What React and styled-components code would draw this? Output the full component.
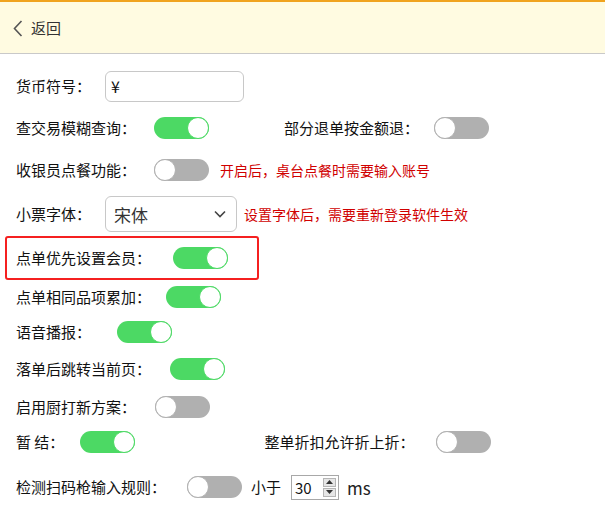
import React, { useState } from "react";
import styled, { createGlobalStyle } from "styled-components";

const GlobalStyle = createGlobalStyle`
  html, body {
    margin: 0;
    padding: 0;
    background: #ffffff;
  }
  body {
    font-family: "Noto Sans CJK SC", "Liberation Sans", sans-serif;
    color: #111;
  }
`;

const Toggle = ({ on, ml, onChange }) => (
  <Track $on={on} $ml={ml} onClick={onChange}>
    <Knob $on={on} />
  </Track>
);

const App = () => {
  const [flags, setFlags] = useState({
    fuzzy: true,
    partRefund: false,
    cashier: false,
    member: true,
    merge: true,
    voice: true,
    jump: true,
    kitchen: false,
    hold: true,
    discount: false,
    scanner: false,
  });

  const flip = (key) => () => setFlags((f) => ({ ...f, [key]: !f[key] }));

  return (
    <>
      <GlobalStyle />
      <Page>
        <Header>
          <BackIcon width="10" height="17" viewBox="0 0 10 17">
            <polyline points="8.5,1 1.5,8.5 8.5,16" fill="none" stroke="#555" strokeWidth="1.6" />
          </BackIcon>
          <BackText>返回</BackText>
        </Header>

        <Content>
          <Row $mt={16} $h={32}>
            <Label>货币符号：</Label>
            <TextInput defaultValue="¥" />
          </Row>

          <Row $mt={11}>
            <Label>查交易模糊查询：</Label>
            <Toggle on={flags.fuzzy} ml={18} onChange={flip("fuzzy")} />
            <Label $ml={75}>部分退单按金额退：</Label>
            <Toggle on={flags.partRefund} ml={15} onChange={flip("partRefund")} />
          </Row>

          <Row $mt={12}>
            <Label>收银员点餐功能：</Label>
            <Toggle on={flags.cashier} ml={18} onChange={flip("cashier")} />
            <Hint $ml={11}>开启后，桌台点餐时需要输入账号</Hint>
          </Row>

          <Row $mt={11} $h={36}>
            <Label>小票字体：</Label>
            <Select>
              <span>宋体</span>
              <Chevron width="12" height="8" viewBox="0 0 12 8">
                <polyline points="1,1.5 6,6.5 11,1.5" fill="none" stroke="#444" strokeWidth="1.6" />
              </Chevron>
            </Select>
            <Hint $ml={7}>设置字体后，需要重新登录软件生效</Hint>
          </Row>

          <Highlight>
            <Label>点单优先设置会员：</Label>
            <Toggle on={flags.member} ml={22} onChange={flip("member")} />
          </Highlight>

          <Row $mt={2}>
            <Label>点单相同品项累加：</Label>
            <Toggle on={flags.merge} ml={15} onChange={flip("merge")} />
          </Row>

          <Row $mt={5}>
            <Label>语音播报：</Label>
            <Toggle on={flags.voice} ml={26} onChange={flip("voice")} />
          </Row>

          <Row $mt={7}>
            <Label>落单后跳转当前页：</Label>
            <Toggle on={flags.jump} ml={19} onChange={flip("jump")} />
          </Row>

          <Row $mt={8}>
            <Label>启用厨打新方案：</Label>
            <Toggle on={flags.kitchen} ml={19} onChange={flip("kitchen")} />
          </Row>

          <Row $mt={5}>
            <Label>暂&nbsp;结：</Label>
            <Toggle on={flags.hold} ml={16} onChange={flip("hold")} />
            <Label $ml={129}>整单折扣允许折上折：</Label>
            <Toggle on={flags.discount} ml={22} onChange={flip("discount")} />
          </Row>

          <Row $mt={15}>
            <Label>检测扫码枪输入规则：</Label>
            <Toggle on={flags.scanner} ml={21} onChange={flip("scanner")} />
            <Label $ml={9}>小于</Label>
            <Spinner>
              <SpinValue>30</SpinValue>
              <SpinButtons>
                <SpinButton>
                  <svg width="7" height="4" viewBox="0 0 7 4">
                    <polygon points="0,4 3.5,0 7,4" fill="#333" />
                  </svg>
                </SpinButton>
                <SpinButton>
                  <svg width="7" height="4" viewBox="0 0 7 4">
                    <polygon points="0,0 3.5,4 7,0" fill="#333" />
                  </svg>
                </SpinButton>
              </SpinButtons>
            </Spinner>
            <Unit>ms</Unit>
          </Row>
        </Content>
      </Page>
    </>
  );
};

export default App;

const Page = styled.div`
  width: 605px;
  height: 516px;
  overflow: hidden;
  background: #fff;
`;

const Header = styled.div`
  height: 51px;
  border-top: 2px solid #f0a31e;
  border-bottom: 1px solid #c9c9c9;
  background: #fffbe1;
  display: flex;
  align-items: center;
  padding-left: 13px;
`;

const BackIcon = styled.svg`
  display: block;
  margin-top: 1px;
`;

const BackText = styled.span`
  margin-left: 8px;
  font-size: 15px;
  color: #333;
`;

const Content = styled.div`
  display: flex;
  flex-direction: column;
  padding-left: 16px;
`;

const Row = styled.div`
  display: flex;
  align-items: center;
  height: ${(p) => p.$h || 30}px;
  margin-top: ${(p) => p.$mt || 0}px;
`;

const Label = styled.span`
  font-size: 15px;
  line-height: 20px;
  color: #111;
  white-space: nowrap;
  margin-left: ${(p) => p.$ml || 0}px;
`;

const Hint = styled.span`
  font-size: 14px;
  color: #d00000;
  white-space: nowrap;
  margin-left: ${(p) => p.$ml || 0}px;
`;

const Track = styled.div`
  position: relative;
  width: 55px;
  height: 22px;
  border-radius: 11px;
  flex-shrink: 0;
  cursor: pointer;
  margin-left: ${(p) => p.$ml || 0}px;
  background: ${(p) => (p.$on ? "#4cd964" : "#b0b0b0")};
`;

const Knob = styled.div`
  position: absolute;
  top: 0;
  left: ${(p) => (p.$on ? "33px" : "0")};
  width: 20px;
  height: 20px;
  border-radius: 50%;
  background: #fff;
  border: 1px solid ${(p) => (p.$on ? "#4cd964" : "#b0b0b0")};
`;

const TextInput = styled.input`
  box-sizing: border-box;
  margin-left: 14px;
  width: 139px;
  height: 31px;
  border: 1px solid #c8c8c8;
  border-radius: 6px;
  padding: 0 0 0 5px;
  font-family: "Noto Sans CJK SC", "Liberation Sans", sans-serif;
  font-size: 16px;
  color: #111;
  outline: none;
`;

const Select = styled.div`
  box-sizing: border-box;
  margin-left: 14px;
  width: 132px;
  height: 36px;
  border: 1px solid #c8c8c8;
  border-radius: 6px;
  display: flex;
  align-items: center;
  justify-content: space-between;
  padding: 0 10px 0 8px;
  font-size: 17px;
  color: #333;
`;

const Chevron = styled.svg`
  display: block;
`;

const Highlight = styled.div`
  display: flex;
  align-items: center;
  box-sizing: border-box;
  width: 254px;
  height: 44px;
  margin-top: 4px;
  margin-left: -11px;
  padding-left: 9px;
  border: 2px solid #f52020;
  border-radius: 3px;
`;

const Spinner = styled.div`
  box-sizing: border-box;
  margin-left: 10px;
  width: 48px;
  height: 25px;
  border: 1px solid #a8a8a8;
  display: flex;
  align-items: center;
  justify-content: space-between;
  padding: 0 2px 0 3px;
`;

const SpinValue = styled.span`
  font-size: 15px;
  color: #111;
  font-family: "Noto Sans CJK SC", "Liberation Sans", sans-serif;
`;

const SpinButtons = styled.div`
  display: flex;
  flex-direction: column;
  gap: 1px;
`;

const SpinButton = styled.div`
  box-sizing: border-box;
  width: 13px;
  height: 9px;
  background: #e6e6e6;
  border: 1px solid #b5b5b5;
  display: flex;
  align-items: center;
  justify-content: center;
`;

const Unit = styled.span`
  margin-left: 8px;
  font-size: 17px;
  color: #222;
`;
